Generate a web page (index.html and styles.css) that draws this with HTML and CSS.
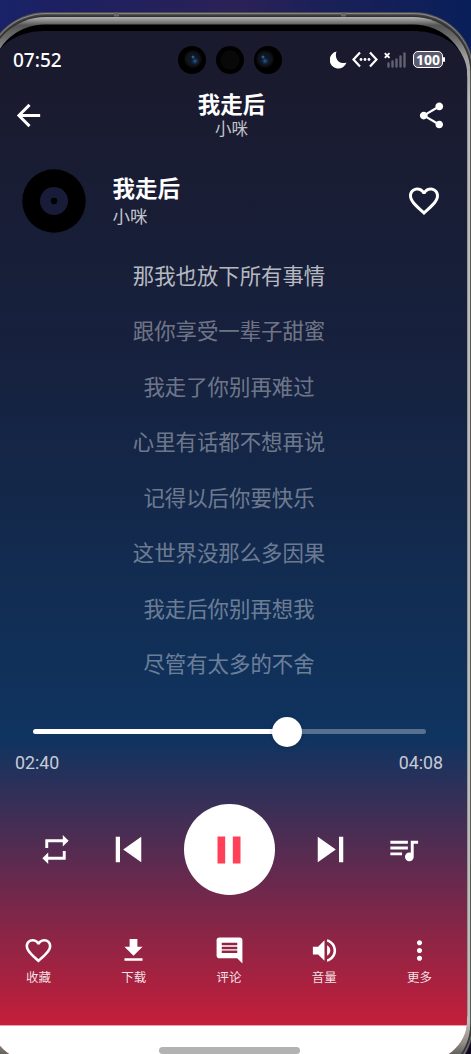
FILE: index.html
```html
<!DOCTYPE html>
<html lang="zh-CN">
<head>
<meta charset="utf-8">
<title>我走后 - 小咪</title>
<link rel="stylesheet" href="styles.css">
</head>
<body>
<svg class="frame" viewBox="0 0 471 1054" aria-hidden="true">
  <defs>
    <linearGradient id="metal" x1="0" y1="17" x2="0" y2="1064" gradientUnits="userSpaceOnUse">
      <stop offset="0" stop-color="#b4b4b4"/><stop offset=".008" stop-color="#555"/><stop offset=".02" stop-color="#6c6c6c"/><stop offset=".04" stop-color="#a0a0a0"/><stop offset=".08" stop-color="#bcbcbc"/><stop offset=".96" stop-color="#bcbcb8"/><stop offset=".98" stop-color="#8f8c85"/><stop offset="1" stop-color="#3a3a38"/>
    </linearGradient>
  </defs>
  <rect x="-14" y="12" width="487.500" height="1071" rx="60" ry="58" fill="#4b4b4c"/>
  <rect x="-13" y="13" width="485.500" height="1069" rx="59" ry="57" fill="#858585"/>
  <rect x="-12.500" y="14.300" width="484.500" height="1066.500" rx="58.500" ry="56" fill="#414141"/>
  <rect x="-12" y="15.800" width="483" height="1064" rx="58" ry="55" fill="#303030"/>
  <rect x="-11.500" y="17" width="481.800" height="1062" rx="57.500" ry="55" fill="url(#metal)"/>
  <rect x="-9" y="24.500" width="476.200" height="1043" rx="54" ry="54" fill="#000"/>
  <path d="M114 12.500h5v4h-5zM341 12.500h5v4h-5z" fill="#68686b"/>
</svg>

<div class="screen">
  <header class="status">
    <span class="clock">07:52</span>
    <div class="cameras">
      <i class="lens lit"></i><i class="lens"></i><i class="lens lit"></i>
    </div>
    <div class="indicators">
      <svg class="moon" viewBox="0 0 17 18"><path d="M6.500 .5A8.600 8.600 0 1 0 16.500 11.500 8.500 8.500 0 0 1 12.500 12C7.500 11.500 4.500 6 6.500 .5Z"/></svg>
      <svg class="link" viewBox="0 0 26 17"><path d="M8 1.500 1.500 8.500 8 15.500M18 1.500 24.500 8.500 18 15.500" fill="none" stroke="#fff" stroke-width="2.200"/><circle cx="9" cy="8.500" r="1.400"/><circle cx="13" cy="8.500" r="1.400"/><circle cx="17" cy="8.500" r="1.400"/></svg>
      <svg class="signal" viewBox="0 0 22 16"><path d="m.8 1.200 4.700 4.700m0-4.700L.8 5.900" stroke="#fff" stroke-width="1.900"/><path d="M4.500 11.500v3M8.500 9.500v5M12.500 7.500v7M16.500 4.500v10M20.500 1.500v13" stroke="#626273" stroke-width="2.400" stroke-linecap="round"/></svg>
      <div class="battery">100</div>
    </div>
  </header>

  <nav class="topbar">
    <svg class="i35" viewBox="0 0 24 24"><path d="M20 11H7.830l5.590-5.590L12 4l-8 8 8 8 1.410-1.410L7.830 13H20v-2z"/></svg>
    <div class="heading">
      <h1>我走后</h1>
      <p>小咪</p>
    </div>
    <svg class="i31 share" viewBox="0 0 24 24"><path d="M18 16.080c-.76 0-1.440.3-1.960.77L8.910 12.700c.05-.23.09-.46.09-.7s-.04-.47-.09-.7l7.050-4.110c.54.5 1.250.81 2.040.81 1.660 0 3-1.340 3-3s-1.340-3-3-3-3 1.340-3 3c0 .24.040.47.090.7L8.040 9.810C7.500 9.310 6.790 9 6 9c-1.660 0-3 1.340-3 3s1.340 3 3 3c.79 0 1.500-.31 2.040-.81l7.120 4.160c-.05.21-.08.43-.08.65 0 1.610 1.310 2.920 2.920 2.920s2.920-1.310 2.920-2.920-1.310-2.920-2.920-2.920z"/></svg>
  </nav>

  <section class="song">
    <svg class="disc" viewBox="0 0 64 64"><circle cx="32" cy="32" r="31.700" fill="#000"/><circle cx="32" cy="32" r="14" fill="#181c38"/><circle cx="32" cy="32" r="3.200" fill="#000"/></svg>
    <div class="meta">
      <h2>我走后</h2>
      <p>小咪</p>
    </div>
    <svg class="i36" viewBox="0 0 24 24"><path d="M16.500 3c-1.740 0-3.410.81-4.500 2.090C10.910 3.810 9.240 3 7.500 3 4.420 3 2 5.420 2 8.500c0 3.780 3.400 6.860 8.550 11.540L12 21.350l1.450-1.320C18.600 15.360 22 12.280 22 8.500 22 5.420 19.580 3 16.500 3zm-4.400 15.550l-.1.100-.1-.1C7.140 14.240 4 11.390 4 8.500 4 6.500 5.500 5 7.500 5c1.540 0 3.040.99 3.570 2.360h1.870C13.460 5.990 14.960 5 16.500 5c2 0 3.500 1.500 3.500 3.500 0 2.890-3.140 5.740-7.900 10.050z"/></svg>
  </section>

  <ol class="lyrics">
    <li class="current">那我也放下所有事情</li>
    <li>跟你享受一辈子甜蜜</li>
    <li>我走了你别再难过</li>
    <li>心里有话都不想再说</li>
    <li>记得以后你要快乐</li>
    <li>这世界没那么多因果</li>
    <li>我走后你别再想我</li>
    <li>尽管有太多的不舍</li>
  </ol>

  <div class="progress"><div class="played"></div><div class="thumb"></div><div class="rest"></div></div>
  <div class="times"><span>02:40</span><span>04:08</span></div>

  <div class="controls">
    <svg class="i35" viewBox="0 0 24 24"><path d="M17 17H7v-3l-4 4 4 4v-3h12v-6h-2M7 7h10v3l4-4-4-4v3H5v6h2V7Z"/></svg>
    <svg class="i51" viewBox="0 0 24 24"><path d="M6 18V6h2v12H6M9.500 12 18 6v12l-8.500-6Z"/></svg>
    <div class="play"><svg class="i46" viewBox="0 0 24 24"><path d="M14 19h4V5h-4M6 19h4V5H6"/></svg></div>
    <svg class="i51" viewBox="0 0 24 24"><path d="M16 18h2V6h-2M6 18l8.500-6L6 6v12Z"/></svg>
    <svg class="i35" viewBox="0 0 24 24"><path d="M15 6H3v2h12V6m0 4H3v2h12v-2M3 16h8v-2H3v2M17 6v8.180c-.31-.11-.65-.18-1-.18a3 3 0 1 0 3 3V8h3V6h-5Z"/></svg>
  </div>

  <footer class="actions">
    <div class="action"><svg class="i31" viewBox="0 0 24 24"><path d="M16.500 3c-1.740 0-3.410.81-4.500 2.090C10.910 3.810 9.240 3 7.500 3 4.420 3 2 5.420 2 8.500c0 3.780 3.400 6.860 8.550 11.540L12 21.350l1.450-1.320C18.600 15.360 22 12.280 22 8.500 22 5.420 19.580 3 16.500 3zm-4.400 15.550l-.1.100-.1-.1C7.140 14.240 4 11.390 4 8.500 4 6.500 5.500 5 7.500 5c1.540 0 3.040.99 3.570 2.360h1.870C13.460 5.990 14.960 5 16.500 5c2 0 3.500 1.500 3.500 3.500 0 2.890-3.140 5.740-7.900 10.050z"/></svg><span>收藏</span></div>
    <div class="action"><svg class="i31" viewBox="0 0 24 24"><path d="M5 20h14v-2H5M19 9h-4V3H9v6H5l7 7 7-7Z"/></svg><span>下载</span></div>
    <div class="action"><svg class="i31" viewBox="0 0 24 24"><path d="M21.990 4c0-1.100-.89-2-1.990-2H4c-1.100 0-2 .9-2 2v12c0 1.100.9 2 2 2h14l4 4-.01-18zM18 14H6v-2h12v2zm0-3H6V9h12v2zm0-3H6V6h12v2z"/></svg><span>评论</span></div>
    <div class="action"><svg class="i31" viewBox="0 0 24 24"><path d="M3 9v6h4l5 5V4L7 9H3zm13.500 3c0-1.770-1.020-3.290-2.500-4.030v8.050c1.480-.73 2.500-2.250 2.500-4.020zM14 3.230v2.060c2.890.86 5 3.540 5 6.710s-2.110 5.850-5 6.710v2.060c4.010-.91 7-4.490 7-8.770s-2.990-7.860-7-8.770z"/></svg><span>音量</span></div>
    <div class="action"><svg class="i31" viewBox="0 0 24 24"><path d="M12 8c1.100 0 2-.9 2-2s-.9-2-2-2-2 .9-2 2 .9 2 2 2zm0 2c-1.100 0-2 .9-2 2s.9 2 2 2 2-.9 2-2-.9-2-2-2zm0 6c-1.100 0-2 .9-2 2s.9 2 2 2 2-.9 2-2-.9-2-2-2z"/></svg><span>更多</span></div>
  </footer>

  <div class="homebar"><div class="handle"></div></div>
</div>
</body>
</html>
```
FILE: styles.css
```css
* { box-sizing: border-box; margin: 0; padding: 0; }
html, body { width: 471px; height: 1054px; overflow: hidden; }
body {
  background:
    linear-gradient(180deg, transparent 500px, #0e0620 1000px),
    linear-gradient(90deg, #192268 0, #1e2060 80px, #2b2157 235px, #1a2058 330px, #091f5a 471px);
  color: #fff;
  font-family: "Noto Sans", "Noto Sans CJK SC", sans-serif;
}
svg { display: block; flex: none; fill: #fff; }
.frame { position: absolute; inset: 0; width: 471px; height: 1054px; }

/* The display runs slightly past the left edge of the viewport. */
.screen {
  position: relative;
  display: flex;
  flex-direction: column;
  width: 476px;
  height: 1033px;
  margin: 31px 0 0 -9px;
  padding: 0 9px;
  overflow: hidden;
  border-radius: 52px / 42px;
  background: linear-gradient(180deg, #1a1a2e 44px, #16213e 329px, #0f3460 709px, #c41e3a 994px);
}
.i31 { width: 31px; height: 31px; }
.i35 { width: 35px; height: 35px; }
.i36 { width: 36px; height: 36px; }
.i46 { width: 46px; height: 46px; }
.i51 { width: 51px; height: 51px; }

.status {
  display: grid;
  grid-template-columns: 1fr auto 1fr;
  align-items: center;
  height: 57px;
  flex: none;
  padding: 0 12px 0 13px;
}
.clock { font-size: 19px; font-weight: 500; line-height: 24px; }
.cameras { display: flex; gap: 10px; }
.lens { width: 28px; height: 28px; border-radius: 50%; background: radial-gradient(circle, #080809 0 9px, #000 10px); }
.lens.lit {
  background:
    radial-gradient(circle at 15px 11px, #4f91ba 0, #1d4b73 1px, transparent 2px),
    radial-gradient(circle at 17px 15px, #2f6290 0, #152f49 2px, transparent 4px),
    radial-gradient(circle at 15px 13px, #0c1625 5px, #101114 7px, #030304 9px, #000 10px);
}
.lens.lit:last-child {
  background:
    radial-gradient(circle at 9px 11px, #4f91ba 0, #1d4b73 1px, transparent 2px),
    radial-gradient(circle at 11px 15px, #2f6290 0, #152f49 2px, transparent 4px),
    radial-gradient(circle at 11px 13px, #0c1625 5px, #101114 7px, #030304 9px, #000 10px);
}
.indicators { display: flex; align-items: center; justify-content: flex-end; }
.moon { width: 17px; height: 18px; margin-right: 5px; }
.link { width: 26px; height: 17px; margin-right: 6px; }
.signal { width: 22px; height: 16px; margin-right: 7px; }
.battery {
  position: relative;
  width: 30px;
  height: 17px;
  margin-right: 3px;
  border: 1px solid #fff;
  border-radius: 5px;
  background: #5a5a6c;
  font-size: 14px;
  font-weight: 700;
  line-height: 15px;
  text-align: center;
}
.battery::after { content: ""; position: absolute; right: -3px; top: 5px; width: 2px; height: 5px; border-radius: 1px; background: #fff; }

.topbar { display: flex; align-items: center; justify-content: space-between; height: 54px; flex: none; padding: 0 11px; }
.heading { margin-left: 1px; text-align: center; }
h1, h2 { font-family: "Noto Sans CJK SC", sans-serif; font-size: 22.500px; font-weight: 700; line-height: 30px; }
.heading p, .meta p { font-size: 16.500px; line-height: 22px; color: rgba(255, 255, 255, .75); }
.heading h1 { line-height: 28px; }
.heading p { line-height: 24px; }

.song { display: flex; align-items: center; height: 92px; flex: none; padding: 26px 16px 0 22px; }
.disc { width: 64px; height: 64px; }
.meta { flex: 1; margin-left: 26.500px; }
.meta p { font-size: 17.500px; line-height: 28px; }

.lyrics { flex: none; height: 444px; margin-top: 13.500px; list-style: none; text-align: center; }
.lyrics li { height: 55.500px; line-height: 55.500px; font-size: 21.400px; color: rgba(255, 255, 255, .4); }
.lyrics .current { color: rgba(255, 255, 255, .7); }

.progress { display: flex; align-items: center; height: 31px; flex: none; margin: 24.500px 32.500px 0; }
.played { width: 240px; height: 5px; border-radius: 3px 0 0 3px; background: #fff; }
.thumb { width: 30px; height: 30px; flex: none; margin: 0 -1px; border-radius: 50%; background: #fff; box-shadow: 0 1px 4px rgba(0, 0, 0, .2); }
.rest { flex: 1; height: 5px; border-radius: 0 3px 3px 0; background: rgba(255, 255, 255, .3); }
.times { display: flex; justify-content: space-between; flex: none; margin-top: 4px; padding: 0 15px; color: rgba(255, 255, 255, .75); font: 400 17.800px/24px Roboto, sans-serif; }

.controls { display: flex; align-items: center; justify-content: space-between; height: 91px; flex: none; margin-top: 29px; padding: 0 37.500px; }
.play { display: flex; align-items: center; justify-content: center; width: 91px; height: 91px; border-radius: 50%; background: #fff; }
.play svg { fill: #ff4058; }

.actions { display: flex; justify-content: space-between; height: 130px; flex: none; padding: 40px 23px 0; }
.action { display: flex; flex-direction: column; align-items: center; width: 31px; }
.action span { margin-top: 2px; font-size: 12.500px; line-height: 19px; color: rgba(255, 255, 255, .88); white-space: nowrap; }

.homebar { flex: 1; margin: 0 -9px; padding-top: 21px; border-top: 1px solid #e9a0ac; background: #fff; }
.handle { width: 141px; height: 7px; margin: 0 auto; border-radius: 4px; background: #b2b2b2; }
```
